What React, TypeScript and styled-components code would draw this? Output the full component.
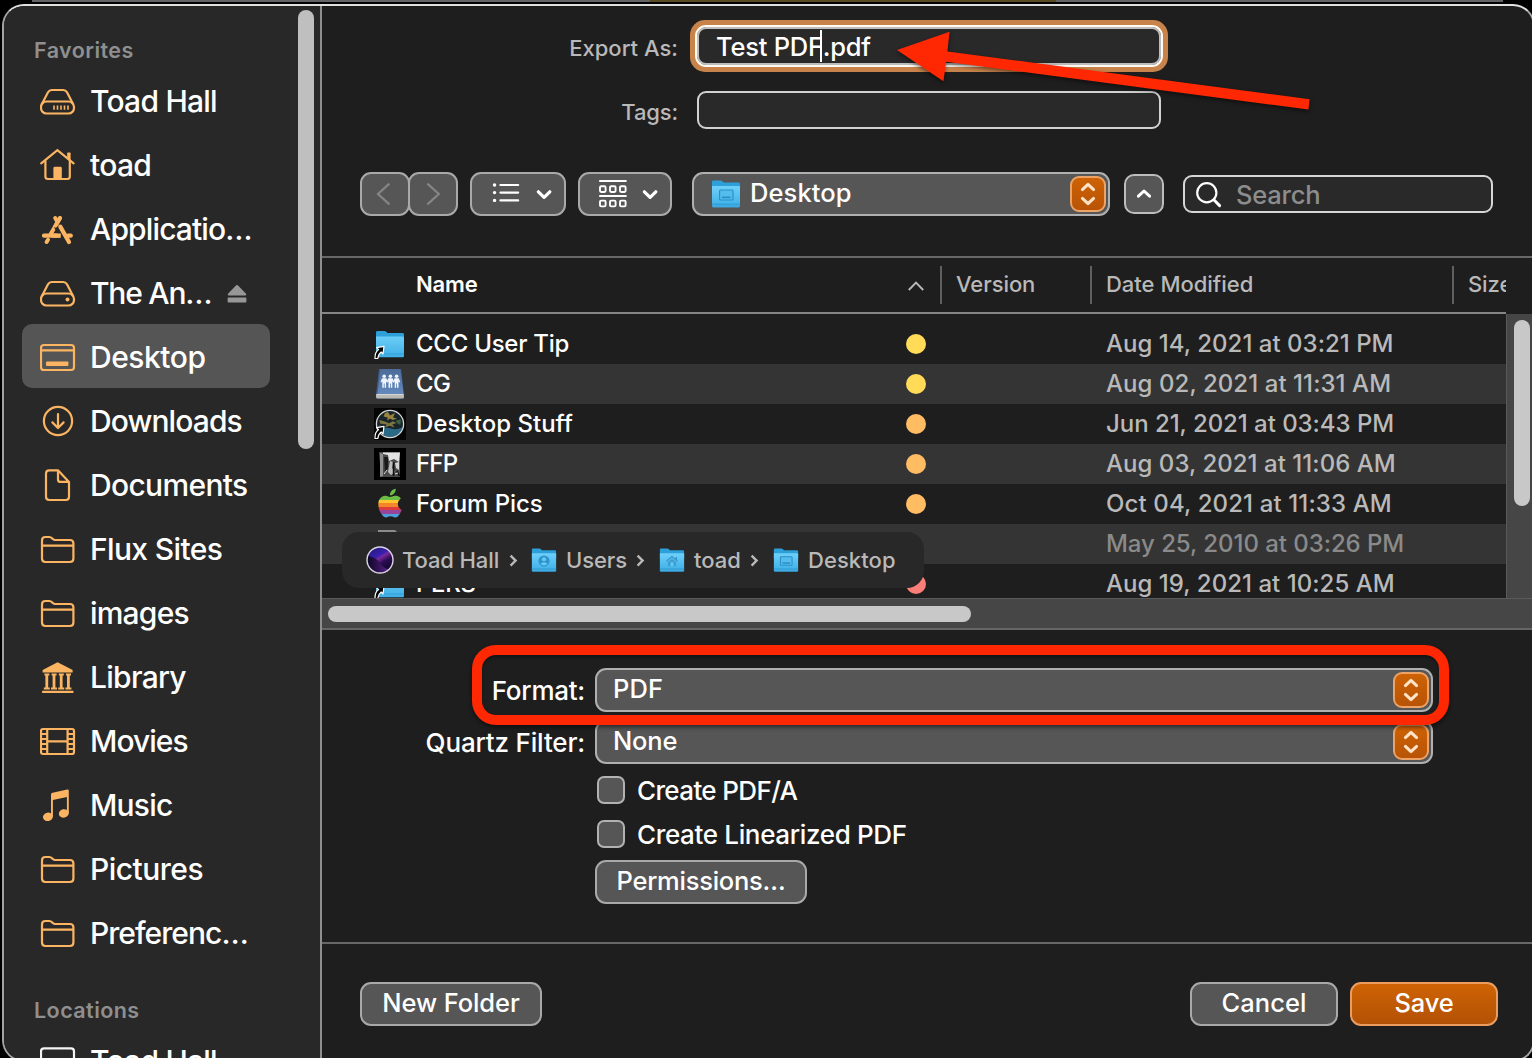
import React from 'react';
import styled, { createGlobalStyle } from 'styled-components';

const AMBER = '#fbb562';
const GREY = '#b9b9b9';

const Global = createGlobalStyle`
  *, *::before, *::after { box-sizing: border-box; }
  body { margin: 0; background: #000; }
  svg { display: block; flex: none; }
`;

/* ---------- shell ---------- */
const Screen = styled.div`
  position: relative;
  width: 1532px;
  height: 1058px;
  overflow: hidden;
  background: #000;
  font-family: Inter, "Liberation Sans", sans-serif;
  font-weight: 460;
  color: #fff;
  white-space: nowrap;
`;
const Backdrop = styled.div`
  display: flex;
  height: 2px;
  margin: 0 29px 2px 32px;
  background: #636365;
`;
const BackdropTab = styled.div`
  width: 406px;
  margin-left: 618px;
  background: #594a1f;
`;
const Window = styled.div`
  display: flex;
  width: 1533px;
  height: 1058px;
  margin-left: 2px;
  border: 2px solid #a3a3a3;
  border-top-color: #dfe1df;
  border-radius: 22px;
  overflow: hidden;
  background: #1e1e1e;
`;
const Text = styled.span<{ $ls?: number }>`
  letter-spacing: calc(${p => p.$ls ?? 0}px - 0.004em);
`;

/* ---------- sidebar ---------- */
const Sidebar = styled.aside`
  position: relative;
  flex: none;
  width: 318px;
  padding-left: 18px;
  background: #282828;
  border-right: 2px solid #8f8f8f;
`;
const SidebarTitle = styled.div<{ $first?: boolean }>`
  height: ${p => (p.$first ? 62 : 64)}px;
  padding: ${p => (p.$first ? 26 : 28)}px 0 0 12px;
  font-size: 21.5px;
  font-weight: 600;
  line-height: 36px;
  color: #8f8f8f;
`;
const SidebarRow = styled.div<{ $active?: boolean }>`
  display: flex;
  align-items: center;
  width: 248px;
  height: 64px;
  padding-left: 18px;
  border-radius: 10px;
  background: ${p => (p.$active ? '#555' : 'transparent')};
  font-size: 30px;
  svg { margin-top: 4px; }
`;
const SidebarLabel = styled(Text)`
  padding: 2px 0 0 14px;
  line-height: 36px;
`;
const Eject = styled.span`
  margin-left: 16px;
`;
const Thumb = styled.div`
  position: absolute;
  border-radius: 8px;
  background: #c8c8c8;
`;
const SidebarThumb = styled(Thumb)`
  left: 294px;
  top: 4px;
  width: 16px;
  height: 439px;
  background: #bfbfbf;
`;

type IconName =
  | 'drive' | 'extDrive' | 'home' | 'apps' | 'desktop' | 'downloads'
  | 'doc' | 'folder' | 'library' | 'movies' | 'music' | 'monitor';

const glyphs: Record<IconName, React.ReactNode> = {
  drive: (
    <>
      <rect x="1" y="17.5" width="33" height="12" rx="5.5" />
      <path d="M2.2 19.5 8 8.2Q9.3 6 11.8 6H23.2Q25.7 6 27 8.2L32.8 19.5" />
      <path d="M14 21.4v4.4M17.5 21.4v4.4M21 21.4v4.4M24.5 21.4v4.4M28 21.4v4.4" strokeWidth="1.6" />
    </>
  ),
  extDrive: (
    <>
      <rect x="1" y="17.5" width="33" height="12" rx="5.5" />
      <path d="M2.2 19.5 8 8.2Q9.3 6 11.8 6H23.2Q25.7 6 27 8.2L32.8 19.5" />
      <circle cx="27.5" cy="23.4" r="2" fill={AMBER} stroke="none" />
    </>
  ),
  home: (
    <>
      <path d="M1.2 15.3 17.4 2.2 33.6 15.3" strokeLinecap="round" />
      <path d="M5.4 12.5V28.5Q5.4 31 7.9 31H27.3Q29.8 31 29.8 28.5V12.5" />
      <path d="M13.4 31V20.2Q13.4 18.8 14.8 18.8H20.4Q21.8 18.8 21.8 20.2V31Z" fill={AMBER} stroke="none" />
      <path d="M27.2 10.5V5.2Q27.2 4.4 28 4.4H29.8Q30.6 4.4 30.6 5.2V13Z" fill={AMBER} stroke="none" />
    </>
  ),
  apps: (
    <>
      <path d="M20 6 10.6 22.2M8 27.8 6.6 30" strokeWidth="4" strokeLinecap="round" />
      <path d="M4 23.7H19M28 23.7H30.8" strokeWidth="4.2" strokeLinecap="round" />
      <path d="M17 14 25.6 29.4" stroke="#282828" strokeWidth="6.5" />
      <path d="M15.2 6 17.4 9.8" strokeWidth="4" strokeLinecap="round" />
      <path d="M20 6 15.6 13.6" strokeWidth="4" strokeLinecap="round" />
      <path d="M20.3 14.6 29 30" strokeWidth="4.2" strokeLinecap="round" />
      <path d="M12 23.7H20.8" strokeWidth="4.2" />
    </>
  ),
  desktop: (
    <>
      <rect x="1" y="5" width="33" height="25" rx="3" />
      <path d="M1 10.3H34" />
      <rect x="6" y="21.4" width="22.4" height="4.6" rx="1" fill={AMBER} stroke="none" />
    </>
  ),
  downloads: (
    <>
      <circle cx="18" cy="17" r="14.1" />
      <path d="M18 10V23.6M12.4 18.4 18 24 23.6 18.4" strokeLinecap="round" strokeLinejoin="round" />
    </>
  ),
  doc: (
    <path d="M18 2.3H9.3Q6 2.3 6 5.6V28.8Q6 32 9.3 32H25.9Q29 32 29 28.8V13.9ZM18 2.3V11.4Q18 13.9 20.5 13.9H29" strokeLinejoin="round" />
  ),
  folder: (
    <path d="M2 13.6H33.4M2 8.4Q2 5 5.4 5H9.3Q10.8 5 12 6.2L12.6 6.8Q13.8 8 15.4 8H30Q33.4 8 33.4 11.4V26.6Q33.4 30 30 30H5.4Q2 30 2 26.6Z" />
  ),
  library: (
    <g fill={AMBER} stroke="none">
      <path d="M17.6 2.2 32.6 10V12.4H2.6V10Z" />
      <path d="M4.4 13.4h5v2h-1.2v12h1.6v2.2H3.8v-2.2h1.6v-12h-1zM11.6 13.4h5v2h-1.2v12h1.6v2.2h-6v-2.2h1.6v-12h-1zM18.8 13.4h5v2h-1.2v12h1.6v2.2h-6v-2.2h1.6v-12h-1zM26 13.4h5v2h-1.2v12h1.6v2.2h-6v-2.2H27v-12h-1z" />
      <rect x="2" y="30.8" width="31.6" height="2.2" rx=".8" />
    </g>
  ),
  movies: (
    <>
      <rect x="1" y="5" width="33" height="25" rx="2" />
      <path d="M7.2 5V30M27.6 5V30M7.2 17.3H27.6" />
      <path d="M1 10H7M1 15H7M1 20H7M1 25H7M28 10H34M28 15H34M28 20H34M28 25H34" strokeWidth="1.8" />
    </>
  ),
  music: (
    <g fill={AMBER} stroke="none">
      <path d="M11 6.5Q11 5 12.6 4.7L27.2 1.5Q28.8 1.2 28.8 2.8V25.4H26.9V8.9L12.9 12.1V28.6H11Z" />
      <ellipse cx="7.9" cy="28.8" rx="5" ry="4.2" transform="rotate(-12 7.9 28.8)" />
      <ellipse cx="23.8" cy="25.4" rx="5" ry="4.2" transform="rotate(-12 23.8 25.4)" />
    </g>
  ),
  monitor: <rect x="1" y="4.4" width="33" height="26" rx="3" stroke="#f4f4f4" />,
};

const SideIcon = ({ name }: { name: IconName }) => (
  <svg width="36" height="36" viewBox="0 0 36 36" fill="none" stroke={AMBER} strokeWidth="2.2">
    {glyphs[name]}
  </svg>
);

const favorites: { icon: IconName; label: string; ls: number; active?: boolean; eject?: boolean }[] = [
  { icon: 'drive', label: 'Toad Hall', ls: -0.65 },
  { icon: 'home', label: 'toad', ls: -0.55 },
  { icon: 'apps', label: 'Applicatio…', ls: -0.75 },
  { icon: 'extDrive', label: 'The An…', ls: -1.1, eject: true },
  { icon: 'desktop', label: 'Desktop', ls: -0.35, active: true },
  { icon: 'downloads', label: 'Downloads', ls: -0.78 },
  { icon: 'doc', label: 'Documents', ls: -0.54 },
  { icon: 'folder', label: 'Flux Sites', ls: -0.52 },
  { icon: 'folder', label: 'images', ls: -0.68 },
  { icon: 'library', label: 'Library', ls: -0.6 },
  { icon: 'movies', label: 'Movies', ls: -0.85 },
  { icon: 'music', label: 'Music', ls: -0.68 },
  { icon: 'folder', label: 'Pictures', ls: -0.4 },
  { icon: 'folder', label: 'Preferenc…', ls: -0.85 },
];

/* ---------- main column ---------- */
const Main = styled.main`
  flex: 1;
  min-width: 0;
  display: flex;
  flex-direction: column;
`;
const Fields = styled.div`
  padding-top: 14px;
`;
const FieldRow = styled.div<{ $h: number; $gap: number; $top?: number }>`
  display: flex;
  align-items: center;
  height: ${p => p.$h}px;
  margin-top: ${p => p.$top ?? 0}px;
  gap: ${p => p.$gap}px;
`;
const FieldLabel = styled.label`
  width: 356px;
  padding-top: 4px;
  text-align: right;
  font-size: 22px;
  line-height: 30px;
  color: ${GREY};
`;
const FocusRing = styled.div`
  width: 478px;
  height: 52px;
  padding: 5px;
  border-radius: 15px;
  background: #c8834b;
`;
const NameInput = styled.div`
  display: flex;
  height: 42px;
  padding-left: 19px;
  border: 2px solid #fffaf2;
  border-radius: 11px;
  box-shadow: inset 0 0 0 2px #bdbcba;
  background: #292929;
  font-size: 25.5px;
  line-height: 39px;
`;
const Caret = styled.span`
  position: relative;
  width: 0;
  &::after {
    content: '';
    position: absolute;
    left: -3px;
    top: 3px;
    width: 2px;
    height: 32px;
    background: #fff;
  }
`;
const TagsInput = styled.div`
  width: 464px;
  height: 38px;
  border: 2px solid #d2d2d2;
  border-radius: 9px;
  background: #292929;
`;

const Toolbar = styled.div`
  display: flex;
  align-items: center;
  height: 44px;
  margin: 43px 0 40px;
  padding-left: 38px;
`;
const Button = styled.div<{ $w: number; $ml?: number; $primary?: boolean }>`
  display: flex;
  align-items: center;
  justify-content: center;
  flex: none;
  width: ${p => p.$w}px;
  height: 44px;
  margin-left: ${p => p.$ml ?? 0}px;
  border: 2px solid ${p => (p.$primary ? '#eb9c5f' : '#a9a9a9')};
  border-radius: 11px;
  background: ${p => (p.$primary ? 'linear-gradient(#cf6304, #b25106)' : '#565656')};
  font-size: 25.5px;
  line-height: 30px;
  padding-bottom: 2px;
`;
const NavButton = styled(Button)`
  padding: 0 2px 0 0;
`;
const MenuButton = styled(Button)<{ $pad: number; $gap: number }>`
  justify-content: flex-start;
  padding: 0 0 0 ${p => p.$pad}px;
  gap: ${p => p.$gap}px;
`;
const UpButton = styled(Button)`
  height: 40px;
  padding: 0;
  border-color: #bdbdbd;
  border-radius: 10px;
`;
const PopUp = styled(Button)<{ $pad: number }>`
  justify-content: flex-start;
  padding: 0 2px 0 ${p => p.$pad}px;
  border-color: #b0b0b0;
`;
const PopUpText = styled(Text)<{ $pl?: number }>`
  flex: 1;
  padding: 0 0 3px ${p => p.$pl ?? 0}px;
`;
const Stepper = styled.div`
  display: flex;
  align-items: center;
  justify-content: center;
  width: 36px;
  height: 36px;
  border: 2px solid #eba368;
  border-radius: 9px;
  background: linear-gradient(#cd6205, #b85406);
`;
const SearchBox = styled.div`
  display: flex;
  align-items: center;
  width: 310px;
  height: 38px;
  margin-left: 19px;
  padding-left: 11px;
  gap: 13px;
  border: 2px solid #d6d6d6;
  border-radius: 9px;
  background: #292929;
  font-size: 25.5px;
  color: #8d8d8d;
`;

const StepperControl = () => (
  <Stepper>
    <svg width="32" height="32" viewBox="0 0 32 32" fill="none" stroke="#ffe3c8" strokeWidth="3" strokeLinecap="round" strokeLinejoin="round">
      <path d="M10.4 11.6 16 6.4 21.6 11.6M10.4 20.4 16 25.6 21.6 20.4" />
    </svg>
  </Stepper>
);
const DownChevron = () => (
  <svg width="16" height="16" viewBox="0 0 16 16" fill="none" stroke="#fff" strokeWidth="3.2" strokeLinecap="round" strokeLinejoin="round">
    <path d="M2.4 5.8 8.1 11.4 13.8 5.8" />
  </svg>
);

const FolderIcon = ({ w, mark }: { w: number; mark?: 'desktop' | 'user' | 'home' }) => (
  <svg width={w} height={w * 0.95} viewBox="0 0 30 28.5">
    <defs>
      <linearGradient id="folderFace" x1="0" y1="0" x2="0" y2="1">
        <stop offset="0" stopColor="#6fd0f9" />
        <stop offset=".8" stopColor="#45b5ea" />
        <stop offset="1" stopColor="#3ba6de" />
      </linearGradient>
    </defs>
    <path d="M1 2Q1 .6 2.4 .6H9.6Q10.6 .6 11.4 1.4L12.8 2.6H27.6Q29 2.6 29 4V12H1Z" fill="#2d9fd9" />
    <path d="M1 6H27.8Q29 6 29 7.2V26Q29 27.4 27.6 27.4H2.4Q1 27.4 1 26Z" fill="url(#folderFace)" />
    <path d="M1 24.2H29" stroke="#2f9ad2" strokeWidth="1" />
    {mark === 'desktop' && (
      <g fill="none" stroke="#2b8fc8">
        <rect x="8.6" y="10" width="13.4" height="10" rx="1" strokeWidth="1.2" fill="#55bdee" />
        <path d="M10.8 17.4H19.6" strokeWidth="1.8" />
      </g>
    )}
    {mark === 'user' && (
      <g>
        <circle cx="15" cy="15" r="6.4" fill="#2f94cc" />
        <circle cx="15" cy="13" r="2.4" fill="#66caf6" />
        <path d="M10.8 18.6Q15 14.2 19.2 18.6Q15 21.4 10.8 18.6Z" fill="#66caf6" />
      </g>
    )}
    {mark === 'home' && (
      <g>
        <path d="M8.6 15.4 15 9.8 21.4 15.4M20 10.4V13.6" fill="none" stroke="#3595cb" strokeWidth="1.5" />
        <path d="M15 12 19.8 16.2V21H10.2V16.2Z" fill="#3d9fd4" />
        <rect x="13.4" y="16.6" width="3.2" height="4.4" fill="#66caf6" />
      </g>
    )}
  </svg>
);

/* ---------- file table ---------- */
const TableArea = styled.section`
  position: relative;
`;
const TableHead = styled.div`
  border-top: 2px solid #676767;
`;
const HeadRow = styled.div`
  display: flex;
  align-items: center;
  width: 1184px;
  height: 56px;
  border-bottom: 2px solid #858585;
  overflow: hidden;
  font-size: 22px;
  color: ${GREY};
`;
const HeadCell = styled.div<{ $w: number; $pad?: number; $last?: boolean }>`
  display: flex;
  align-items: center;
  justify-content: space-between;
  flex: none;
  width: ${p => p.$w}px;
  height: 38px;
  padding: 0 16px 0 ${p => p.$pad ?? 14}px;
  border-right: ${p => (p.$last ? 0 : 2)}px solid #5f5f5f;
`;
const HeadText = styled(Text)<{ $bold?: boolean }>`
  padding-bottom: 2px;
  font-weight: ${p => (p.$bold ? 620 : 460)};
  color: ${p => (p.$bold ? '#fff' : 'inherit')};
`;
const Body = styled.div`
  display: flex;
  height: 284px;
`;
const List = styled.div`
  width: 1184px;
  padding-top: 10px;
  overflow: hidden;
`;
const VTrack = styled.div`
  flex: 1;
  position: relative;
  background: #464646;
  border-left: 1px solid #5a5a5a;
`;
const VThumb = styled(Thumb)`
  left: 7px;
  top: 6px;
  width: 16px;
  height: 186px;
`;
const HTrack = styled.div`
  height: 32px;
  padding: 7px 0 0 6px;
  background: #464646;
  border-top: 1px solid #5a5a5a;
  border-bottom: 2px solid #656565;
`;
const HThumb = styled.div`
  width: 643px;
  height: 16px;
  border-radius: 8px;
  background: #c8c8c8;
`;
const FileRow = styled.div<{ $alt?: boolean }>`
  display: flex;
  align-items: center;
  height: 40px;
  padding-left: 52px;
  background: ${p => (p.$alt ? '#343434' : '#1e1e1e')};
  font-size: 24px;
  line-height: 30px;
`;
const FileIcon = styled.div`
  width: 32px;
  height: 32px;
`;
const FileName = styled(Text)`
  width: 500px;
  padding-left: 10px;
`;
const Dot = styled.span<{ $c: string }>`
  width: 20px;
  height: 20px;
  border-radius: 50%;
  background: ${p => p.$c};
`;
const FileDate = styled(Text)<{ $dim?: boolean }>`
  padding-left: 180px;
  color: ${p => (p.$dim ? '#8a8a8a' : GREY)};
`;
const PathBar = styled.div`
  position: absolute;
  left: 20px;
  top: 276px;
  display: flex;
  align-items: center;
  width: 582px;
  height: 56px;
  padding-left: 23px;
  border-radius: 17px;
  background: #282828;
  font-size: 22px;
  color: ${GREY};
`;
const Crumb = styled(Text)<{ $l: number; $w: number }>`
  width: ${p => p.$w}px;
  padding-left: ${p => p.$l}px;
`;
const CrumbSlot = styled.div<{ $w: number }>`
  width: ${p => p.$w}px;
  padding-left: 1px;
`;

const AliasBadge = () => (
  <path d="M1 30.5Q.8 24.2 4.6 21.6L2.6 19.6 10 18.4 9 26 7.2 24Q4.4 26 3.8 30.5Z" fill="#000" stroke="#fff" strokeWidth="1.2" strokeLinejoin="round" />
);
const FolderArt = () => (
  <>
    <defs>
      <linearGradient id="bigFolder" x1="0" y1="0" x2="0" y2="1">
        <stop offset="0" stopColor="#6bcdf8" />
        <stop offset="1" stopColor="#40afe6" />
      </linearGradient>
    </defs>
    <path d="M2 4.4Q2 3 3.4 3H10.4Q11.4 3 12.2 3.8L13.6 5H28.6Q30 5 30 6.4V14H2Z" fill="#2d9fd9" />
    <path d="M2 8.6H28.8Q30 8.6 30 9.8V28Q30 29.2 28.8 29.2H3.2Q2 29.2 2 28Z" fill="url(#bigFolder)" />
    <path d="M2 26H30" stroke="#339fd8" />
  </>
);
const Person = ({ x }: { x: number }) => (
  <g fill="#eef4fb" transform={`translate(${x} -.6)`}>
    <circle cx="0" cy="8.8" r="1.8" />
    <path d="M-2.2 10.9H2.2L3.6 14.6 2.6 15.2 1.9 13.8V20.4H.4V16H-.4V20.4H-1.9V13.8L-2.6 15.2-3.6 14.6Z" />
  </g>
);
const fileArt: Record<string, React.ReactNode> = {
  alias: (<><FolderArt /><AliasBadge /></>),
  share: (
    <>
      <defs>
        <linearGradient id="shareFace" x1="0" y1="0" x2="0" y2="1">
          <stop offset="0" stopColor="#4c6b98" />
          <stop offset="1" stopColor="#6489bd" />
        </linearGradient>
      </defs>
      <path d="M5 1H27L30 26V29Q30 30.6 28.4 30.6H3.6Q2 30.6 2 29V26Z" fill="#3e5c88" />
      <path d="M6.4 1H26.4L29.6 26H3.4Z" fill="url(#shareFace)" />
      <path d="M2 26.4H30V29Q30 30.6 28.4 30.6H3.6Q2 30.6 2 29Z" fill="#b9b9b4" />
      <path d="M2.4 26.6H29.6" stroke="#dcdcd8" />
      <Person x={10.2} /><Person x={16.4} /><Person x={22.6} />
    </>
  ),
  globe: (
    <>
      <rect width="32" height="32" fill="#050505" />
      <circle cx="16" cy="16" r="13.6" fill="#18262c" />
      <path d="M6 22Q11 18.5 17 20.5T28.6 19Q27 28.5 16 29.4 8 28.6 6 22Z" fill="#2a6a86" />
      <path d="M11 5 14 4 16 7.4 21 5 19 9.6 23 10.6 18.6 12 16 10.4 13.4 12.6 13.6 9.4 9.6 8.4Z" fill="#9a8440" />
      <path d="M5.4 12 11 13.4 15 15.2 19 13.2 22.4 15 18.4 16.4 20.6 19.4 15.6 17.8 11 19.6 12.6 16.4 6 15.4Z" fill="#7d7440" />
      <path d="M21.6 12.4 27 11.6 26.4 17 23.4 15.4ZM4.6 17 8.6 18.6 6 21Z" fill="#3e5f42" />
      <circle cx="16" cy="16" r="13.6" fill="none" stroke="#d8d8d8" strokeWidth="1.3" />
      <AliasBadge />
    </>
  ),
  photo: (
    <>
      <rect width="32" height="32" fill="#000" />
      <path d="M5 4H26V29H7Z" fill="#4b4b4b" />
      <path d="M9 4.5H26L25 14 20 11 15 13 14 7 9 6Z" fill="#e3e3e3" />
      <path d="M6 5 9 6V28L6 29Z" fill="#8f8f8f" />
      <path d="M10 9H14V20L11 25Z" fill="#1a1a1a" />
      <path d="M16 13 19 14 18 20 21 24 17 27 14 24Z" fill="#bdbdbd" />
      <path d="M21 15 25 14V22L22 20Z" fill="#d2d2d2" />
      <path d="M19.6 14V28M23 23 25.4 28" stroke="#111" strokeWidth="1.6" />
      <path d="M10 26 13 22M21 26 24 25" stroke="#ddd" />
    </>
  ),
  apple: (
    <>
      <defs>
        <linearGradient id="rainbow" gradientUnits="userSpaceOnUse" x1="0" y1="0" x2="0" y2="24">
          <stop offset=".385" stopColor="#6cbd45" /><stop offset=".385" stopColor="#fdc52e" />
          <stop offset=".5" stopColor="#fdc52e" /><stop offset=".5" stopColor="#f5852a" />
          <stop offset=".62" stopColor="#f5852a" /><stop offset=".62" stopColor="#de3b3f" />
          <stop offset=".745" stopColor="#de3b3f" /><stop offset=".745" stopColor="#96459a" />
          <stop offset=".87" stopColor="#96459a" /><stop offset=".87" stopColor="#4b9fdc" />
        </linearGradient>
      </defs>
      <path
        transform="translate(1.6 .7) scale(1.2)"
        fill="url(#rainbow)"
        d="M12.152 6.896c-.948 0-2.415-1.078-3.96-1.04-2.04.027-3.91 1.183-4.961 3.014-2.117 3.675-.546 9.103 1.519 12.09 1.013 1.454 2.208 3.09 3.792 3.039 1.52-.065 2.09-.987 3.935-.987 1.831 0 2.35.987 3.96.948 1.637-.026 2.676-1.48 3.676-2.948 1.156-1.688 1.636-3.325 1.662-3.415-.039-.013-3.182-1.221-3.22-4.857-.026-3.04 2.48-4.494 2.597-4.559-1.429-2.09-3.623-2.324-4.39-2.376-2-.156-3.675 1.09-4.61 1.09zM15.53 3.83c.843-1.012 1.4-2.427 1.245-3.83-1.207.052-2.662.805-3.532 1.818-.78.896-1.454 2.338-1.273 3.714 1.338.104 2.715-.688 3.559-1.701"
      />
    </>
  ),
  file: <path d="M4 2H21L28 9V30H4Z" fill="#8c8c8c" />,
};

const YELLOW = '#ffdb58';
const ORANGE = '#febc63';
const files = [
  { art: 'alias', name: 'CCC User Tip', ls: -0.16, dot: YELLOW, date: 'Aug 14, 2021 at 03:21 PM', dls: 0.12 },
  { art: 'share', name: 'CG', ls: -0.5, dot: YELLOW, date: 'Aug 02, 2021 at 11:31 AM', dls: 0.16 },
  { art: 'globe', name: 'Desktop Stuff', ls: 0.1, dot: ORANGE, date: 'Jun 21, 2021 at 03:43 PM', dls: 0.05 },
  { art: 'photo', name: 'FFP', ls: -0.7, dot: ORANGE, date: 'Aug 03, 2021 at 11:06 AM', dls: 0.13 },
  { art: 'apple', name: 'Forum Pics', ls: 0, dot: ORANGE, date: 'Oct 04, 2021 at 11:33 AM', dls: 0.22 },
  { art: 'file', name: '', ls: 0, dot: 'transparent', date: 'May 25, 2010 at 03:26 PM', dls: 0.04, dim: true },
  { art: 'alias', name: 'PERS', ls: -0.2, dot: '#fb7f78', date: 'Aug 19, 2021 at 10:25 AM', dls: 0.13 },
];

const CrumbChevron = () => (
  <svg width="10" height="14" viewBox="0 0 10 14" fill="none" stroke={GREY} strokeWidth="2.4">
    <path d="M1.6 2.6 6.6 7.6 1.6 12.6" />
  </svg>
);

/* ---------- options ---------- */
const Options = styled.section`
  position: relative;
  height: 312px;
  padding-top: 38px;
`;
const OptionGrid = styled.div`
  display: grid;
  grid-template-columns: 263px 838px;
  grid-template-rows: 44px 44px;
  gap: 8px 10px;
`;
const OptionLabel = styled.label`
  padding-top: 2px;
  text-align: right;
  font-size: 26px;
  line-height: 41px;
`;
const CheckList = styled.div`
  display: flex;
  flex-direction: column;
  align-items: flex-start;
  gap: 16px;
  padding: 12px 0 12px 275px;
`;
const Check = styled.div`
  display: flex;
  align-items: center;
  height: 28px;
  font-size: 26px;
  line-height: 30px;
`;
const CheckText = styled(Text)`
  padding: 2px 0 0 12px;
`;
const CheckBox = styled.span`
  width: 28px;
  height: 28px;
  border: 2px solid #b2b2b2;
  border-radius: 7px;
  background: #565656;
`;
const Highlight = styled.div`
  position: absolute;
  left: 150px;
  top: 15px;
  width: 977px;
  height: 80px;
  border: 10px solid #ff2803;
  border-radius: 24px;
  box-shadow: 0 2px 4px rgba(0, 0, 0, .55), inset 0 2px 3px rgba(0, 0, 0, .35);
`;
const Footer = styled.footer`
  display: flex;
  flex: 1;
  padding: 38px 35px 0 38px;
  border-top: 2px solid #676767;
`;
const Spacer = styled.div`
  flex: 1;
`;
const Arrow = styled.svg`
  position: absolute;
  left: 890px;
  top: 20px;
  filter: drop-shadow(0 2px 2px rgba(0, 0, 0, .5));
`;

export default function App() {
  return (
    <Screen>
      <Global />
      <Backdrop><BackdropTab /></Backdrop>
      <Window>
        <Sidebar>
          <SidebarTitle $first><Text $ls={0.52}>Favorites</Text></SidebarTitle>
          {favorites.map(f => (
            <SidebarRow key={f.label} $active={f.active}>
              <SideIcon name={f.icon} />
              <SidebarLabel $ls={f.ls}>{f.label}</SidebarLabel>
              {f.eject && (
                <Eject>
                  <svg width="20" height="20" viewBox="0 0 20 20" fill="#979797">
                    <path d="M9.2 1.3Q10 .6 10.8 1.3L19 9.8Q19.8 11.4 18.4 11.4H1.6Q.2 11.4 1 9.8Z" />
                    <rect x=".6" y="13.6" width="18.8" height="5" rx="1" />
                  </svg>
                </Eject>
              )}
            </SidebarRow>
          ))}
          <SidebarTitle><Text $ls={0.53}>Locations</Text></SidebarTitle>
          <SidebarRow>
            <SideIcon name="monitor" />
            <SidebarLabel $ls={-0.65}>Toad Hall</SidebarLabel>
          </SidebarRow>
          <SidebarThumb />
        </Sidebar>

        <Main>
          <Fields>
            <FieldRow $h={52} $gap={12}>
              <FieldLabel><Text $ls={0.1}>Export As:</Text></FieldLabel>
              <FocusRing>
                <NameInput>
                  <Text $ls={-0.14}>Test PDF</Text>
                  <Caret />
                  <Text $ls={-0.14}>.pdf</Text>
                </NameInput>
              </FocusRing>
            </FieldRow>
            <FieldRow $h={38} $gap={19} $top={19}>
              <FieldLabel><Text $ls={-0.05}>Tags:</Text></FieldLabel>
              <TagsInput />
            </FieldRow>
          </Fields>

          <Toolbar>
            <NavButton $w={50}>
              <svg width="24" height="28" viewBox="0 0 24 28" fill="none" stroke="#858585" strokeWidth="2.2">
                <path d="M17.4 3.6 6 14 17.4 24.4" />
              </svg>
            </NavButton>
            <NavButton $w={50} $ml={-2}>
              <svg width="24" height="28" viewBox="0 0 24 28" fill="none" stroke="#858585" strokeWidth="2.2">
                <path d="M7.4 3.6 18.8 14 7.4 24.4" />
              </svg>
            </NavButton>
            <MenuButton $w={96} $ml={12} $pad={20} $gap={16}>
              <svg width="28" height="28" viewBox="0 0 28 28" fill="none" stroke="#fff" strokeWidth="2.1" strokeLinecap="round">
                <path d="M8.4 5H26.2M8.4 12.6H26.2M8.4 20.4H26.2" />
                <path d="M2.5 5h.1M2.5 12.6h.1M2.5 20.4h.1" strokeWidth="3.4" />
              </svg>
              <DownChevron />
            </MenuButton>
            <MenuButton $w={94} $ml={12} $pad={18} $gap={14}>
              <svg width="30" height="30" viewBox="0 0 30 30" fill="none" stroke="#fff" strokeWidth="1.9">
                <path d="M1.2 2H28.6M1.2 17H28.6" />
                <rect x="2" y="7.2" width="5.6" height="5.8" rx="1.2" />
                <rect x="12" y="7.2" width="5.6" height="5.8" rx="1.2" />
                <rect x="22" y="7.2" width="5.6" height="5.8" rx="1.2" />
                <rect x="2" y="21.6" width="5.6" height="5.8" rx="1.2" />
                <rect x="12" y="21.6" width="5.6" height="5.8" rx="1.2" />
                <rect x="22" y="21.6" width="5.6" height="5.8" rx="1.2" />
              </svg>
              <DownChevron />
            </MenuButton>
            <PopUp $w={418} $ml={20} $pad={17}>
              <FolderIcon w={30} mark="desktop" />
              <PopUpText $ls={0.2} $pl={9}>Desktop</PopUpText>
              <StepperControl />
            </PopUp>
            <UpButton $w={40} $ml={14}>
              <svg width="16" height="16" viewBox="0 0 16 16" fill="none" stroke="#fff" strokeWidth="3" strokeLinecap="round" strokeLinejoin="round">
                <path d="M2.4 10.2 8 5 13.6 10.2" />
              </svg>
            </UpButton>
            <SearchBox>
              <svg width="27" height="28" viewBox="0 0 27 28" fill="none" stroke="#fff" strokeLinecap="round">
                <circle cx="10.8" cy="12.8" r="9.6" strokeWidth="2.2" />
                <path d="M17.8 19.8 23.6 25.6" strokeWidth="3" />
              </svg>
              <Text $ls={-0.11}>Search</Text>
            </SearchBox>
          </Toolbar>

          <TableArea>
            <TableHead>
              <HeadRow>
                <HeadCell $w={620} $pad={94}>
                  <HeadText $bold $ls={-0.05}>Name</HeadText>
                  <svg width="16" height="12" viewBox="0 0 16 12" fill="none" stroke={GREY} strokeWidth="1.9">
                    <path d="M.8 11 8 3.6 15.2 11" />
                  </svg>
                </HeadCell>
                <HeadCell $w={150}><HeadText $ls={0.02}>Version</HeadText></HeadCell>
                <HeadCell $w={362}><HeadText $ls={0.08}>Date Modified</HeadText></HeadCell>
                <HeadCell $w={80} $last><HeadText>Size</HeadText></HeadCell>
              </HeadRow>
            </TableHead>
            <Body>
              <List>
                {files.map((f, i) => (
                  <FileRow key={i} $alt={i % 2 === 1}>
                    <FileIcon><svg width="32" height="32" viewBox="0 0 32 32">{fileArt[f.art]}</svg></FileIcon>
                    <FileName $ls={f.ls}>{f.name}</FileName>
                    <Dot $c={f.dot} />
                    <FileDate $ls={f.dls} $dim={f.dim}>{f.date}</FileDate>
                  </FileRow>
                ))}
              </List>
              <VTrack><VThumb /></VTrack>
            </Body>
            <HTrack><HThumb /></HTrack>
            <PathBar>
              <svg width="30" height="30" viewBox="0 0 30 30">
                <defs>
                  <linearGradient id="disk" x1="0" y1="0" x2=".6" y2="1">
                    <stop offset="0" stopColor="#1b1a6e" />
                    <stop offset=".45" stopColor="#3b1fb0" />
                    <stop offset=".52" stopColor="#7a2a9c" />
                    <stop offset=".7" stopColor="#2b0d52" />
                    <stop offset="1" stopColor="#12052a" />
                  </linearGradient>
                  <linearGradient id="diskDark" x1="0" y1="0" x2="1" y2="0">
                    <stop offset="0" stopColor="#0a0624" />
                    <stop offset="1" stopColor="#5a1f86" />
                  </linearGradient>
                </defs>
                <circle cx="15" cy="15" r="13" fill="url(#disk)" />
                <path d="M3 11Q11 12 15 18T24 24Q19 28.4 12 27.6 3 25 2 15Z" fill="url(#diskDark)" />
                <circle cx="15" cy="15" r="13" fill="none" stroke="#d9d4e4" strokeWidth="1.4" />
              </svg>
              <Crumb $ls={-0.02} $l={7} $w={113}>Toad Hall</Crumb>
              <CrumbSlot $w={23}><CrumbChevron /></CrumbSlot>
              <FolderIcon w={26} mark="user" />
              <Crumb $ls={0} $l={9} $w={78}>Users</Crumb>
              <CrumbSlot $w={24}><CrumbChevron /></CrumbSlot>
              <FolderIcon w={26} mark="home" />
              <Crumb $ls={0.1} $l={9} $w={64}>toad</Crumb>
              <CrumbSlot $w={24}><CrumbChevron /></CrumbSlot>
              <FolderIcon w={26} mark="desktop" />
              <Crumb $ls={0.15} $l={9} $w={100}>Desktop</Crumb>
            </PathBar>
          </TableArea>

          <Options>
            <OptionGrid>
              <OptionLabel><Text $ls={-0.15}>Format:</Text></OptionLabel>
              <PopUp $w={838} $pad={16}>
                <PopUpText $ls={0.2}>PDF</PopUpText>
                <StepperControl />
              </PopUp>
              <OptionLabel><Text $ls={-0.07}>Quartz Filter:</Text></OptionLabel>
              <PopUp $w={838} $pad={16}>
                <PopUpText $ls={-0.1}>None</PopUpText>
                <StepperControl />
              </PopUp>
            </OptionGrid>
            <CheckList>
              <Check><CheckBox /><CheckText $ls={-0.53}>Create PDF/A</CheckText></Check>
              <Check><CheckBox /><CheckText $ls={-0.24}>Create Linearized PDF</CheckText></Check>
            </CheckList>
            <Button $w={212} $ml={273}><Text $ls={-0.15}>Permissions…</Text></Button>
            <Highlight />
          </Options>

          <Footer>
            <Button $w={182}><Text $ls={0}>New Folder</Text></Button>
            <Spacer />
            <Button $w={148}><Text $ls={0.2}>Cancel</Text></Button>
            <Button $w={148} $ml={12} $primary><Text $ls={-0.1}>Save</Text></Button>
          </Footer>
        </Main>
      </Window>
      <Arrow width="430" height="100" viewBox="890 20 430 100">
        <path d="M897 50 949.5 31.8 947.4 51.4 1309.6 99.2 1308.4 109.6 946.2 61.8 943.4 81.2Z" fill="#ff2803" />
      </Arrow>
    </Screen>
  );
}
